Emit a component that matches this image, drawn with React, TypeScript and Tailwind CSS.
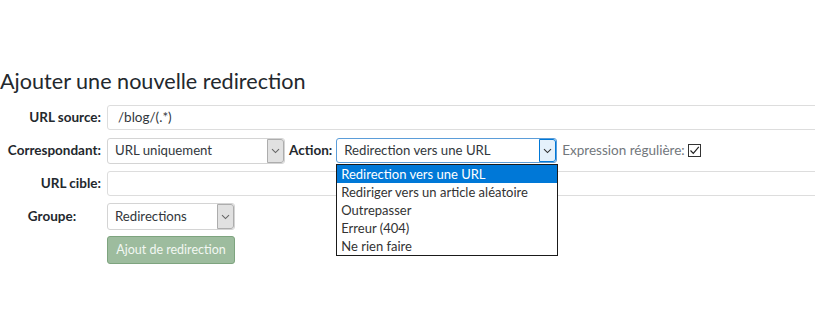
import React from "react";

const Chevron = ({ color = "#555" }: { color?: string }) => (
  <svg width="9" height="6" viewBox="0 0 9 6" fill="none">
    <path d="M1 1.2 L4.5 4.6 L8 1.2" stroke={color} strokeWidth="1.1" />
  </svg>
);

function SelectBox({
  value,
  width,
  focused = false,
  height = 26,
}: {
  value: string;
  width: number;
  focused?: boolean;
  height?: number;
}) {
  return (
    <div
      className={
        "relative shrink-0 flex items-center bg-white rounded-[3px] border " +
        (focused ? "border-[#5b9dd9]" : "border-[#d4d4d4]")
      }
      style={{ width, height }}
    >
      <span className="pl-[7px] text-[13.2px] text-[#32373c] whitespace-nowrap">{value}</span>
      <div
        className={
          "absolute right-0 top-0 bottom-0 w-[17px] flex items-center justify-center rounded-r-[3px] border " +
          (focused ? "bg-[#e5f1fb] border-[#0078d7]" : "bg-[#e1e1e1] border-[#adadad]")
        }
      >
        <Chevron color={focused ? "#333" : "#666"} />
      </div>
    </div>
  );
}

const labelCls =
  "w-[104px] shrink-0 pr-[3px] text-right text-[13.5px] font-bold text-[#23282d] whitespace-nowrap";

export default function App() {
  const options = [
    "Redirection vers une URL",
    "Rediriger vers un article aléatoire",
    "Outrepasser",
    "Erreur (404)",
    "Ne rien faire",
  ];
  return (
    <div
      className="w-[815px] h-[320px] overflow-hidden bg-white text-[#32373c]"
      style={{ fontFamily: "Lato, 'Noto Sans', sans-serif" }}
    >
      <h2 className="pt-[66px] text-[21.6px] leading-[30px] text-[#23282d] font-normal whitespace-nowrap">
        Ajouter une nouvelle redirection
      </h2>
      <div className="mt-[5px] flex flex-col">
        {/* URL source */}
        <div className="flex items-center h-[33px]">
          <div className={labelCls}>URL source:</div>
          <div className="ml-[3px] shrink-0 h-[25px] w-[740px] flex items-center border border-[#dddddd] rounded-[3px] bg-white">
            <span className="pl-[10px] text-[13.5px] text-[#32373c]">/blog/(.*)</span>
          </div>
        </div>
        {/* Correspondant / Action */}
        <div className="flex items-center h-[33px]">
          <div className={labelCls}>Correspondant:</div>
          <div className="ml-[3px] shrink-0">
            <SelectBox value="URL uniquement" width={178} />
          </div>
          <div className="ml-[4px] shrink-0 text-[13.5px] font-bold text-[#23282d] self-start pt-[6px]">
            Action:
          </div>
          <div className="relative ml-[4px] shrink-0">
            <SelectBox value="Redirection vers une URL" width={221} focused height={25} />
            <div className="absolute left-0 top-[26px] w-[222px] h-[92px] bg-white border border-[#1a1a1a] z-10 flex flex-col">
              {options.map((o, i) => (
                <div
                  key={o}
                  className={
                    "h-[18px] leading-[18px] pl-[4px] text-[13px] whitespace-nowrap " +
                    (i === 0 ? "bg-[#0078d7] text-white" : "text-[#333]")
                  }
                >
                  {o}
                </div>
              ))}
            </div>
          </div>
          <div className="ml-[5px] shrink-0 flex items-center text-[13.5px] text-[#72777c] whitespace-nowrap">
            Expression régulière:
            <span className="ml-[3px] w-[13px] h-[13px] border border-[#333] bg-white flex items-center justify-center">
              <svg width="11" height="11" viewBox="0 0 11 11" fill="none">
                <path d="M1.5 5.5 L4.3 8.3 L9.8 1.8" stroke="#222" strokeWidth="1.2" />
              </svg>
            </span>
          </div>
        </div>
        {/* URL cible */}
        <div className="flex items-center h-[33px]">
          <div className={labelCls}>URL cible:</div>
          <div className="ml-[3px] shrink-0 h-[25px] w-[740px] border border-[#dddddd] rounded-[3px] bg-white" />
        </div>
        {/* Groupe */}
        <div className="flex items-center h-[33px]">
          <div className="w-[104px] shrink-0 text-center text-[13.5px] font-bold text-[#23282d] whitespace-nowrap">
            Groupe:
          </div>
          <div className="ml-[3px] shrink-0">
            <SelectBox value="Redirections" width={128} height={27} />
          </div>
        </div>
        {/* Button */}
        <div className="flex items-center h-[34px]">
          <div className="w-[104px] shrink-0" />
          <button className="ml-[3px] shrink-0 w-[128px] h-[28px] rounded-[3px] border border-[#7ea47f] bg-[#9dbc9e] text-[12.5px] text-[#f2f7f2] whitespace-nowrap">
            Ajout de redirection
          </button>
        </div>
      </div>
    </div>
  );
}
